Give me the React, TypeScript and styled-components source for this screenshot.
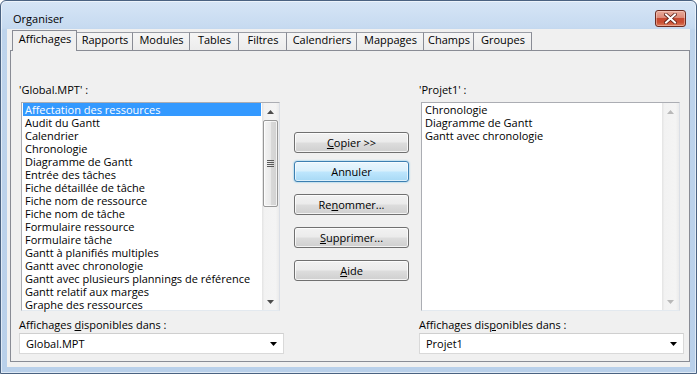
import React from "react";
import styled, { createGlobalStyle, css } from "styled-components";

const FONT = `"Open Sans", "Noto Sans", "DejaVu Sans", sans-serif`;

const GlobalStyle = createGlobalStyle`
  *, *::before, *::after { box-sizing: border-box; }
  html, body { margin: 0; padding: 0; background: #ffffff; }
  body { font-family: ${FONT}; font-size: 11px; color: #000; }
`;

const Window = styled.div`
  width: 697px;
  height: 374px;
  display: flex;
  flex-direction: column;
  border: 1px solid #4a6281;
  border-radius: 6px 6px 0 0;
  padding: 0 6px 6px 6px;
  background: linear-gradient(180deg, #d6e5f6 0px, #c6daf0 27px, #bed4ec 29px, #b9d0ea 100%);
  box-shadow: inset 0 0 0 1px rgba(255, 255, 255, 0.55);
`;

const TitleBar = styled.div`
  height: 28px;
  flex: none;
  display: flex;
  align-items: center;
  justify-content: space-between;
  padding: 7px 4px 0 6px;
`;

const Title = styled.span`
  line-height: 15px;
  color: #000;
`;

const CloseButton = styled.div`
  width: 31px;
  height: 17px;
  display: flex;
  align-items: center;
  justify-content: center;
  border: 1px solid #6b2b20;
  border-radius: 3px;
  background: linear-gradient(180deg, #e9ab9a 0%, #dc8a78 45%, #c74a31 50%, #c84e33 75%, #dc7d5d 100%);
  box-shadow: inset 0 0 0 1px rgba(255, 220, 210, 0.45);
`;

const Client = styled.div`
  flex: 1;
  display: flex;
  flex-direction: column;
  background: #f0f0f0;
  padding: 1px 0 5px 3px;
`;

const TabStrip = styled.div`
  height: 20px;
  flex: none;
  display: flex;
  align-items: flex-end;
  padding-left: 2px;
`;

const Tab = styled.div<{ $active?: boolean; $w: number }>`
  width: ${(p) => p.$w}px;
  height: 18px;
  display: flex;
  justify-content: center;
  line-height: 14px;
  padding-left: 1px;
  border-top: 1px solid #9a9da5;
  border-right: 1px solid #898c95;
  background: linear-gradient(180deg, #f5f5f5 0%, #ececec 100%);
  white-space: nowrap;
  ${(p) =>
    p.$active &&
    css`
      height: 21px;
      margin-bottom: -1px;
      padding-top: 1px;
      position: relative;
      z-index: 2;
      border-left: 1px solid #898c95;
      border-top-color: #898c95;
      background: #f0f0f0;
    `}
`;

const Panel = styled.div`
  flex: 1;
  border: 1px solid #898c95;
  background: #f0f0f0;
  display: grid;
  grid-template-columns: 265px 115px 265px;
  column-gap: 10px;
  padding: 31px 0 6px 8px;
`;

const Column = styled.div`
  display: flex;
  flex-direction: column;
`;

const Label = styled.div<{ $top?: number }>`
  height: 15px;
  line-height: 15px;
  white-space: nowrap;
  margin-top: ${(p) => p.$top ?? 0}px;
`;

const ListBox = styled.div`
  width: 259px;
  height: 209px;
  margin: 5px 0 0 2px;
  display: flex;
  border: 1px solid #abadb3;
  border-right-color: #dbdfe6;
  border-bottom-color: #e3e9ef;
  background: #ffffff;
`;

const Items = styled.ul`
  flex: 1;
  min-width: 0;
  margin: 0;
  padding: 0 1px;
  list-style: none;
`;

const Item = styled.li<{ $selected?: boolean }>`
  height: 13px;
  line-height: 13px;
  padding-left: 2px;
  white-space: nowrap;
  ${(p) =>
    p.$selected &&
    css`
      background: #3399ff;
      color: #ffffff;
    `}
`;

const ScrollBar = styled.div`
  width: 17px;
  flex: none;
  display: flex;
  flex-direction: column;
  background: linear-gradient(90deg, #e3e3e3 0%, #f2f2f2 15%, #f4f4f4 80%, #ebebeb 100%);
`;

const ArrowButton = styled.div`
  height: 17px;
  flex: none;
  display: flex;
  align-items: center;
  justify-content: center;
`;

const Track = styled.div`
  flex: 1;
  display: flex;
  flex-direction: column;
  padding: 0 1px;
`;

const Thumb = styled.div`
  height: 87px;
  display: flex;
  align-items: center;
  justify-content: center;
  border: 1px solid #979797;
  border-radius: 2px;
  background: linear-gradient(90deg, #f4f4f4 0%, #e9e9e9 50%, #d9d9d9 51%, #d2d2d2 100%);
  box-shadow: inset 0 0 0 1px rgba(255, 255, 255, 0.7);
`;

const Select = styled.div`
  height: 21px;
  margin-top: 1px;
  display: flex;
  align-items: center;
  justify-content: space-between;
  padding: 0 6px 0 6px;
  line-height: 15px;
  border: 1px solid #d9d9d9;
  border-top-color: #cfcfcf;
  background: #ffffff;
`;

const ButtonStack = styled.div`
  display: flex;
  flex-direction: column;
  gap: 12px;
  padding-top: 50px;
`;

const ButtonPair = styled.div`
  display: flex;
  flex-direction: column;
  gap: 8px;
`;

const Button = styled.div<{ $focused?: boolean }>`
  width: 115px;
  height: 21px;
  display: flex;
  align-items: center;
  justify-content: center;
  line-height: 15px;
  border: 1px solid #707070;
  border-radius: 3px;
  background: linear-gradient(180deg, #f2f2f2 0%, #ebebeb 48%, #dddddd 52%, #cfcfcf 100%);
  box-shadow: inset 0 0 0 1px rgba(255, 255, 255, 0.75);
  ${(p) =>
    p.$focused &&
    css`
      border-color: #3c7fb1;
      background: linear-gradient(180deg, #eaf6fd 0%, #d9f0fc 48%, #bee6fd 52%, #a7d9f5 100%);
      box-shadow: inset 0 0 0 1px rgba(255, 255, 255, 0.6), 0 0 2px #5cb9e8;
    `}
`;

const U = styled.span`
  text-decoration: underline;
  text-underline-offset: 1px;
`;

const TriangleDown = ({ color = "#000", w = 7 }: { color?: string; w?: number }) => (
  <svg width={w} height={4} viewBox={`0 0 ${w} 4`}>
    <polygon points={`0,0 ${w},0 ${w / 2},4`} fill={color} />
  </svg>
);

const TriangleUp = ({ color = "#000", w = 7 }: { color?: string; w?: number }) => (
  <svg width={w} height={4} viewBox={`0 0 ${w} 4`}>
    <polygon points={`0,4 ${w},4 ${w / 2},0`} fill={color} />
  </svg>
);

const Grip = () => (
  <svg width={7} height={8} viewBox="0 0 7 8">
    {[0, 2, 4, 6].map((y) => (
      <rect key={y} x={0} y={y} width={7} height={1} fill="#5a5a5a" />
    ))}
  </svg>
);

const CloseX = () => (
  <svg width={13} height={11} viewBox="0 0 13 11">
    <path d="M2 1.5 L11 9.5 M11 1.5 L2 9.5" stroke="#5a1e14" strokeWidth={3.6} strokeLinecap="square" />
    <path d="M2 1.5 L11 9.5 M11 1.5 L2 9.5" stroke="#ffffff" strokeWidth={2} strokeLinecap="square" />
  </svg>
);

const tabs = [
  { label: "Affichages", w: 65 },
  { label: "Rapports", w: 56 },
  { label: "Modules", w: 57 },
  { label: "Tables", w: 49 },
  { label: "Filtres", w: 48 },
  { label: "Calendriers", w: 70 },
  { label: "Mappages", w: 67 },
  { label: "Champs", w: 50 },
  { label: "Groupes", w: 58 },
];

const globalViews = [
  "Affectation des ressources",
  "Audit du Gantt",
  "Calendrier",
  "Chronologie",
  "Diagramme de Gantt",
  "Entrée des tâches",
  "Fiche détaillée de tâche",
  "Fiche nom de ressource",
  "Fiche nom de tâche",
  "Formulaire ressource",
  "Formulaire tâche",
  "Gantt à planifiés multiples",
  "Gantt avec chronologie",
  "Gantt avec plusieurs plannings de référence",
  "Gantt relatif aux marges",
  "Graphe des ressources",
];

const projectViews = ["Chronologie", "Diagramme de Gantt", "Gantt avec chronologie"];

const List = ({ items, selected, enabled }: { items: string[]; selected?: number; enabled: boolean }) => {
  const arrow = enabled ? "#4d4d4d" : "#b9b9b9";
  return (
    <ListBox>
      <Items>
        {items.map((it, i) => (
          <Item key={it} $selected={i === selected}>
            {it}
          </Item>
        ))}
      </Items>
      <ScrollBar>
        <ArrowButton>
          <TriangleUp color={arrow} />
        </ArrowButton>
        <Track>
          {enabled && (
            <Thumb>
              <Grip />
            </Thumb>
          )}
        </Track>
        <ArrowButton>
          <TriangleDown color={arrow} />
        </ArrowButton>
      </ScrollBar>
    </ListBox>
  );
};

export default function App() {
  return (
    <>
      <GlobalStyle />
      <Window>
        <TitleBar>
          <Title>Organiser</Title>
          <CloseButton>
            <CloseX />
          </CloseButton>
        </TitleBar>
        <Client>
          <TabStrip>
            {tabs.map((t, i) => (
              <Tab key={t.label} $w={t.w} $active={i === 0}>
                {t.label}
              </Tab>
            ))}
          </TabStrip>
          <Panel>
            <Column>
              <Label>'Global.MPT' :</Label>
              <List items={globalViews} selected={0} enabled />
              <Label $top={6}>
                Affichages <U>d</U>isponibles dans :
              </Label>
              <Select>
                <span>Global.MPT</span>
                <TriangleDown />
              </Select>
            </Column>
            <ButtonStack>
              <ButtonPair>
                <Button>
                  <span>
                    <U>C</U>opier &gt;&gt;
                  </span>
                </Button>
                <Button $focused>Annuler</Button>
              </ButtonPair>
              <Button>
                <span>
                  Re<U>n</U>ommer...
                </span>
              </Button>
              <Button>
                <span>
                  <U>S</U>upprimer...
                </span>
              </Button>
              <Button>
                <span>
                  <U>A</U>ide
                </span>
              </Button>
            </ButtonStack>
            <Column>
              <Label>'Projet1' :</Label>
              <List items={projectViews} enabled={false} />
              <Label $top={6}>
                Affichages dis<U>p</U>onibles dans :
              </Label>
              <Select>
                <span>Projet1</span>
                <TriangleDown />
              </Select>
            </Column>
          </Panel>
        </Client>
      </Window>
    </>
  );
}
